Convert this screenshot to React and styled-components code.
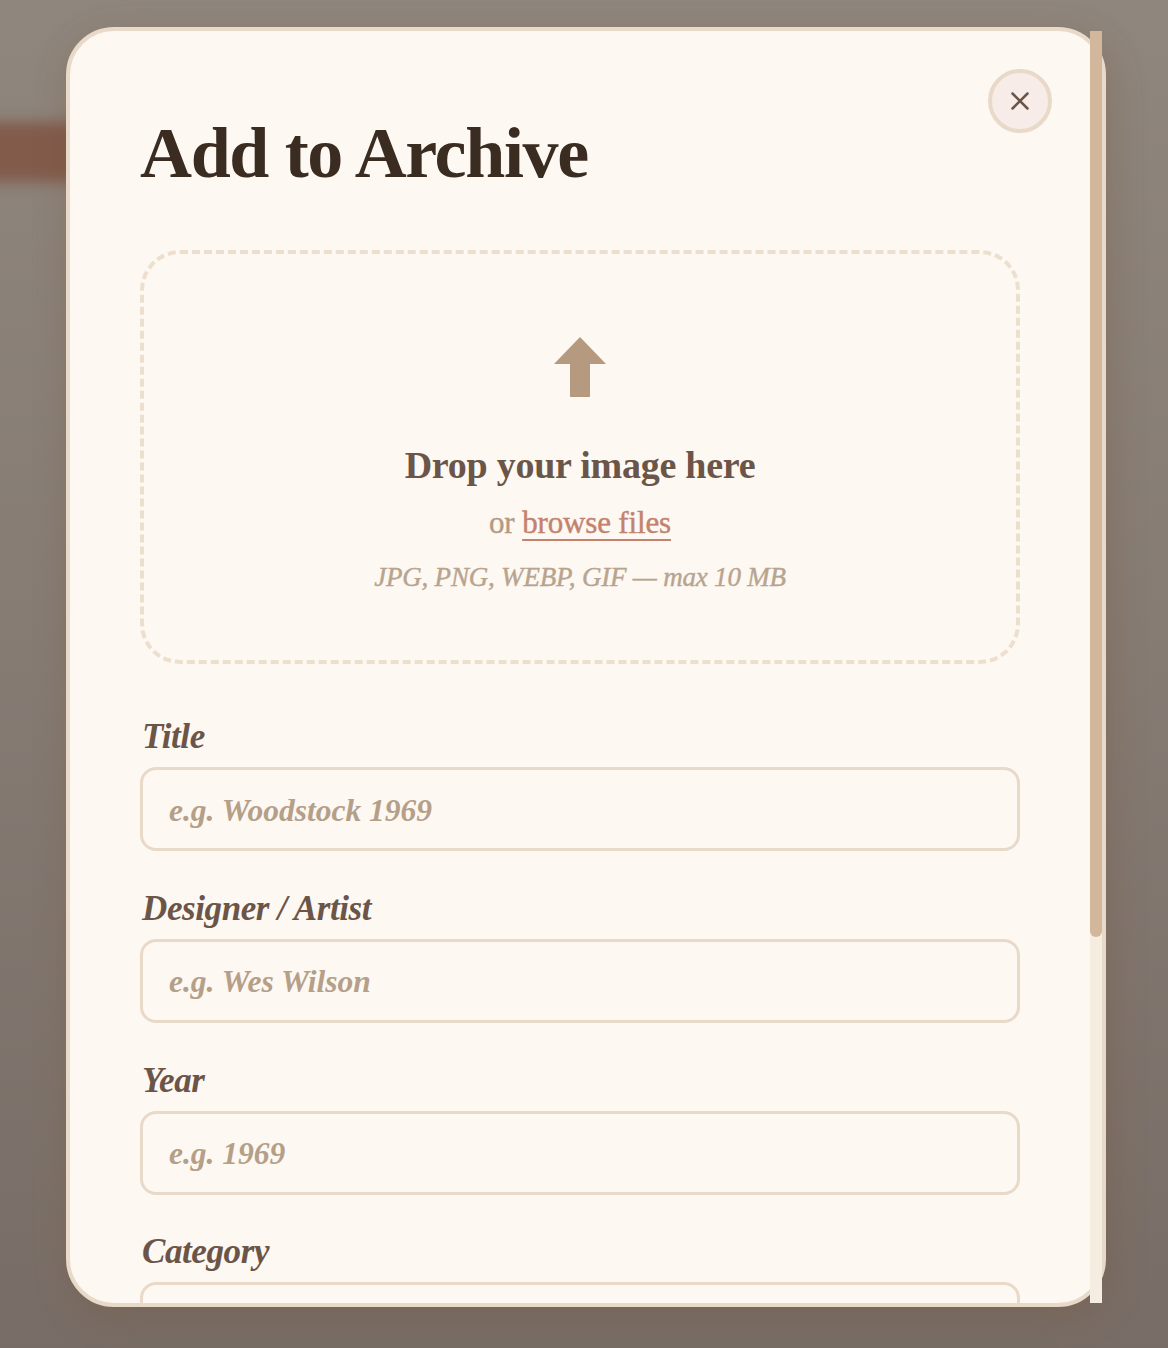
import React from "react"
import styled, { createGlobalStyle } from "styled-components"
import { X } from "lucide-react"

const serif = `"Liberation Serif", "Times New Roman", serif`

const fields = [
  { label: "Title", placeholder: "e.g. Woodstock 1969" },
  { label: "Designer / Artist", placeholder: "e.g. Wes Wilson" },
  { label: "Year", placeholder: "e.g. 1969" },
]

export default function App() {
  return (
    <>
      <GlobalStyle />
      <Backdrop>
        <Glow />
        <ModalFrame>
          <Modal>
            <CloseButton aria-label="Close">
              <X size={30} strokeWidth={2} />
            </CloseButton>
            <Heading>Add to Archive</Heading>
            <DropZone>
              <UploadArrow viewBox="0 0 52 60">
                <path d="M26 0 L52 27 H36 V60 H16 V27 H0 Z" />
              </UploadArrow>
              <DropTitle>Drop your image here</DropTitle>
              <DropText>
                or <BrowseLink>browse files</BrowseLink>
              </DropText>
              <DropHint>JPG, PNG, WEBP, GIF — max 10 MB</DropHint>
            </DropZone>
            <Form>
              {fields.map((field) => (
                <Field key={field.label}>
                  <Label>{field.label}</Label>
                  <Input placeholder={field.placeholder} />
                </Field>
              ))}
              <Field>
                <Label>Category</Label>
                <Select defaultValue="poster">
                  <option value="poster">Poster</option>
                  <option value="album">Album Cover</option>
                  <option value="flyer">Flyer</option>
                </Select>
              </Field>
            </Form>
          </Modal>
          <ScrollTrack>
            <ScrollThumb />
          </ScrollTrack>
        </ModalFrame>
      </Backdrop>
    </>
  )
}

const GlobalStyle = createGlobalStyle`
  html, body {
    margin: 0;
    padding: 0;
    height: 100%;
    overflow: hidden;
  }
`

const Backdrop = styled.div`
  position: relative;
  box-sizing: border-box;
  height: 1348px;
  padding: 27px 62px 41px 66px;
  overflow: hidden;
  background: linear-gradient(180deg, #8f867d 0%, #867c74 45%, #786d66 100%);
  font-family: ${serif};
`

const Glow = styled.div`
  position: absolute;
  left: -40px;
  top: 122px;
  width: 120px;
  height: 60px;
  background: #825b4b;
  filter: blur(7px);
`

const ModalFrame = styled.div`
  position: relative;
  height: 1280px;
`

const Modal = styled.div`
  position: relative;
  box-sizing: border-box;
  height: 100%;
  padding: 0 82px 0 70px;
  overflow: hidden;
  background: #fdf8f2;
  border: 4px solid #e8d9c8;
  border-radius: 48px;
  box-shadow: 4px 10px 36px rgba(120, 78, 52, 0.3);
`

const ScrollTrack = styled.div`
  position: absolute;
  top: 4px;
  right: 4px;
  bottom: 4px;
  width: 12px;
  background: #f5ede0;
`

const ScrollThumb = styled.div`
  height: 906px;
  background: #d2b79d;
  border-radius: 0 0 6px 6px;
`

const CloseButton = styled.button`
  position: absolute;
  top: 38px;
  right: 50px;
  display: flex;
  align-items: center;
  justify-content: center;
  width: 64px;
  height: 64px;
  padding: 0;
  color: #6b5548;
  background: #f7ece7;
  border: 4px solid #e8d9c8;
  border-radius: 50%;
`

const Heading = styled.h2`
  margin: 77px 0 52px;
  font-size: 72px;
  line-height: 90px;
  font-weight: 700;
  letter-spacing: -1.35px;
  color: #3a2c20;
`

const DropZone = styled.div`
  box-sizing: border-box;
  display: flex;
  flex-direction: column;
  align-items: center;
  height: 414px;
  padding-top: 83px;
  border: 4px dashed #eddfce;
  border-radius: 40px;
`

const UploadArrow = styled.svg`
  flex-shrink: 0;
  width: 52px;
  height: 60px;
  fill: #b59a80;
`

const DropTitle = styled.p`
  margin: 44px 0 0;
  font-size: 38px;
  line-height: 48px;
  font-weight: 700;
  letter-spacing: -0.25px;
  color: #6b5548;
`

const DropText = styled.p`
  margin: 14px 0 0;
  font-size: 31px;
  line-height: 40px;
  letter-spacing: -0.15px;
  color: #b59a80;
  -webkit-text-stroke: 0.4px currentColor;
`

const BrowseLink = styled.span`
  color: #c4826e;
  text-decoration: underline 2px;
  text-underline-offset: 6px;
`

const DropHint = styled.p`
  margin: 16px 0 0;
  font-size: 27px;
  line-height: 36px;
  font-style: italic;
  letter-spacing: -0.2px;
  color: #b8a48e;
  -webkit-text-stroke: 0.4px currentColor;
`

const Form = styled.div`
  display: flex;
  flex-direction: column;
  gap: 33.8px;
  margin-top: 49px;
`

const Field = styled.div`
  display: flex;
  flex-direction: column;
  gap: 6px;
`

const Label = styled.label`
  padding-left: 2px;
  font-size: 35px;
  line-height: 48px;
  font-style: italic;
  font-weight: 700;
  letter-spacing: -0.4px;
  color: #6b5548;
`

const Input = styled.input`
  box-sizing: border-box;
  flex-shrink: 0;
  width: 100%;
  height: 84px;
  padding: 3px 26px 0;
  font-family: ${serif};
  font-size: 31.5px;
  font-style: italic;
  background: #fdf8f2;
  border: 3px solid #e8d9c8;
  border-radius: 16px;
  outline: none;

  &::placeholder {
    color: #b59f88;
    font-weight: 700;
    opacity: 1;
  }
`

const Select = styled.select`
  box-sizing: border-box;
  flex-shrink: 0;
  width: 100%;
  height: 84px;
  padding: 0 26px;
  font-family: ${serif};
  font-size: 31.5px;
  color: #6b5548;
  background: #fdf8f2;
  border: 3px solid #e8d9c8;
  border-radius: 16px;
`
